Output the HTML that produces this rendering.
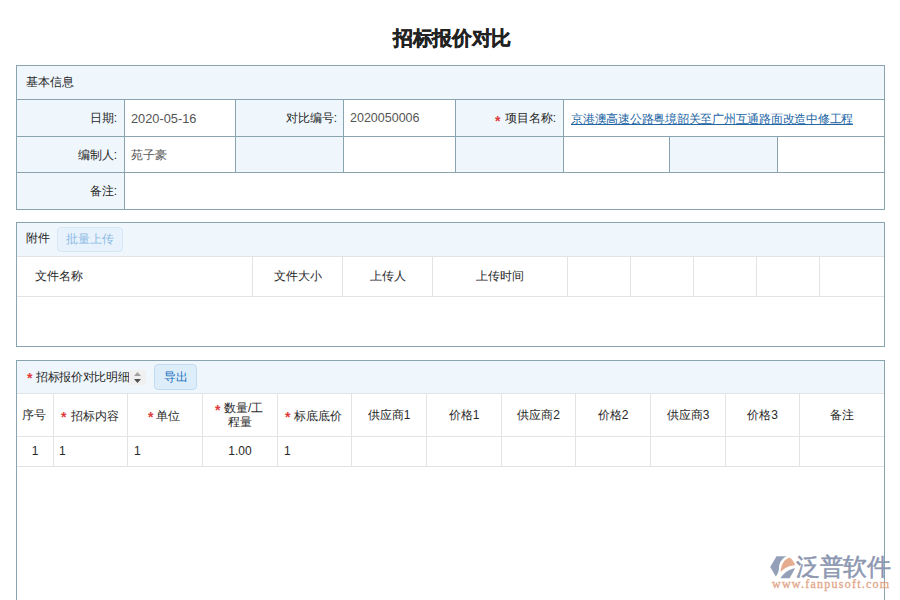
<!DOCTYPE html>
<html><head><meta charset="utf-8"><style>
html,body{margin:0;padding:0;width:900px;height:600px;overflow:hidden;background:#fff}
body{font-family:"Liberation Sans",sans-serif;font-size:12px;color:#282828;position:relative}
.a{position:absolute}
.t{position:absolute;white-space:nowrap;line-height:17px}
.star{position:absolute;font-size:14px;font-weight:bold;line-height:20px;color:#e03a3a}
.lnk{color:#2366a5;text-decoration:underline}
.btn1{box-sizing:border-box;border:1px solid #d6e7f6;background:#e7f2fc;border-radius:4px;color:#8dbbe4;text-align:center;line-height:23px}
.btn2{box-sizing:border-box;border:1px solid #c3dbef;background:#ddedfa;border-radius:4px;color:#1a70be;text-align:center;line-height:24px}
</style></head><body>
<div class="t" style="left:2px;width:900px;text-align:center;top:25px;font-size:20px;font-weight:bold;color:#222;line-height:27px;-webkit-text-stroke:0.3px #222;letter-spacing:-0.3px">招标报价对比</div>
<div class="a" style="left:16px;top:65px;width:869px;height:145px;background:#fff;box-sizing:border-box;border:1px solid #89a3b0"></div>
<div class="a" style="left:17px;top:66px;width:867px;height:33px;background:#eff7fd;"></div>
<div class="a" style="left:17px;top:99px;width:867px;height:1px;background:#89a3b0;"></div>
<div class="a" style="left:17px;top:136px;width:867px;height:1px;background:#89a3b0;"></div>
<div class="a" style="left:17px;top:172px;width:867px;height:1px;background:#89a3b0;"></div>
<div class="a" style="left:17px;top:100px;width:107px;height:36px;background:#eff7fd;"></div>
<div class="a" style="left:236px;top:100px;width:107px;height:36px;background:#eff7fd;"></div>
<div class="a" style="left:456px;top:100px;width:107px;height:36px;background:#eff7fd;"></div>
<div class="a" style="left:17px;top:137px;width:107px;height:35px;background:#eff7fd;"></div>
<div class="a" style="left:236px;top:137px;width:107px;height:35px;background:#eff7fd;"></div>
<div class="a" style="left:456px;top:137px;width:107px;height:35px;background:#eff7fd;"></div>
<div class="a" style="left:670px;top:137px;width:107px;height:35px;background:#eff7fd;"></div>
<div class="a" style="left:17px;top:173px;width:107px;height:36px;background:#eff7fd;"></div>
<div class="a" style="left:124px;top:100px;width:1px;height:109px;background:#89a3b0;"></div>
<div class="a" style="left:235px;top:100px;width:1px;height:72px;background:#89a3b0;"></div>
<div class="a" style="left:343px;top:100px;width:1px;height:72px;background:#89a3b0;"></div>
<div class="a" style="left:455px;top:100px;width:1px;height:72px;background:#89a3b0;"></div>
<div class="a" style="left:563px;top:100px;width:1px;height:72px;background:#89a3b0;"></div>
<div class="a" style="left:669px;top:137px;width:1px;height:35px;background:#89a3b0;"></div>
<div class="a" style="left:777px;top:137px;width:1px;height:35px;background:#89a3b0;"></div>
<div class="t" style="left:26px;top:74px;">基本信息</div>
<div class="t" style="right:783px;top:110px;">日期:</div>
<div class="t" style="left:131px;top:110px;color:#555;font-size:12.8px">2020-05-16</div>
<div class="t" style="right:563px;top:110px;">对比编号:</div>
<div class="t" style="left:350px;top:110px;color:#555;font-size:12.5px">2020050006</div>
<div class="t" style="right:344px;top:110px;">项目名称:</div>
<div class="a star" style="left:495px;top:111px">*</div>
<div class="t" style="left:571px;top:111px;"><span class="lnk" style="letter-spacing:-0.25px">京港澳高速公路粤境韶关至广州互通路面改造中修工程</span></div>
<div class="t" style="right:783px;top:147px;">编制人:</div>
<div class="t" style="left:131px;top:147px;color:#555">苑子豪</div>
<div class="t" style="right:783px;top:183px;">备注:</div>
<div class="a" style="left:16px;top:222px;width:869px;height:125px;background:#fff;box-sizing:border-box;border:1px solid #89a3b0"></div>
<div class="a" style="left:17px;top:223px;width:867px;height:33px;background:#eff7fd;"></div>
<div class="a" style="left:17px;top:256px;width:867px;height:1px;background:#e3e3e3;"></div>
<div class="a" style="left:17px;top:296px;width:867px;height:1px;background:#e3e3e3;"></div>
<div class="a" style="left:252px;top:257px;width:1px;height:39px;background:#e3e3e3;"></div>
<div class="a" style="left:342px;top:257px;width:1px;height:39px;background:#e3e3e3;"></div>
<div class="a" style="left:432px;top:257px;width:1px;height:39px;background:#e3e3e3;"></div>
<div class="a" style="left:567px;top:257px;width:1px;height:39px;background:#e3e3e3;"></div>
<div class="a" style="left:630px;top:257px;width:1px;height:39px;background:#e3e3e3;"></div>
<div class="a" style="left:693px;top:257px;width:1px;height:39px;background:#e3e3e3;"></div>
<div class="a" style="left:756px;top:257px;width:1px;height:39px;background:#e3e3e3;"></div>
<div class="a" style="left:819px;top:257px;width:1px;height:39px;background:#e3e3e3;"></div>
<div class="t" style="left:26px;top:230px;">附件</div>
<div class="a btn1" style="left:57px;top:227px;width:66px;height:25px"><span>批量上传</span></div>
<div class="t" style="left:35px;top:268px;">文件名称</div>
<div class="t" style="left:253px;width:89px;text-align:center;top:268px;">文件大小</div>
<div class="t" style="left:343px;width:89px;text-align:center;top:268px;">上传人</div>
<div class="t" style="left:433px;width:134px;text-align:center;top:268px;">上传时间</div>
<div class="a" style="left:16px;top:360px;width:869px;height:260px;background:#fff;box-sizing:border-box;border:1px solid #89a3b0;border-bottom:none"></div>
<div class="a" style="left:17px;top:361px;width:867px;height:32px;background:#eff7fd;"></div>
<div class="a" style="left:17px;top:393px;width:867px;height:1px;background:#e3e3e3;"></div>
<div class="a" style="left:17px;top:436px;width:867px;height:1px;background:#e3e3e3;"></div>
<div class="a" style="left:17px;top:466px;width:867px;height:1px;background:#e3e3e3;"></div>
<div class="a" style="left:53px;top:394px;width:1px;height:72px;background:#e3e3e3;"></div>
<div class="a" style="left:127px;top:394px;width:1px;height:72px;background:#e3e3e3;"></div>
<div class="a" style="left:202px;top:394px;width:1px;height:72px;background:#e3e3e3;"></div>
<div class="a" style="left:277px;top:394px;width:1px;height:72px;background:#e3e3e3;"></div>
<div class="a" style="left:351px;top:394px;width:1px;height:72px;background:#e3e3e3;"></div>
<div class="a" style="left:426px;top:394px;width:1px;height:72px;background:#e3e3e3;"></div>
<div class="a" style="left:501px;top:394px;width:1px;height:72px;background:#e3e3e3;"></div>
<div class="a" style="left:575px;top:394px;width:1px;height:72px;background:#e3e3e3;"></div>
<div class="a" style="left:650px;top:394px;width:1px;height:72px;background:#e3e3e3;"></div>
<div class="a" style="left:725px;top:394px;width:1px;height:72px;background:#e3e3e3;"></div>
<div class="a" style="left:799px;top:394px;width:1px;height:72px;background:#e3e3e3;"></div>
<div class="t" style="left:36px;top:369px;letter-spacing:-0.35px">招标报价对比明细</div>
<div class="a star" style="left:27px;top:368px">*</div>
<div class="a" style="left:129px;top:370px;width:17px;height:15px;background:#f0f0f0;"></div>
<svg class="a" style="left:133px;top:371px" width="9" height="13" viewBox="0 0 9 13"><path d="M4.5 1 L8 5 L1 5 Z" fill="#a0a0a0"/><path d="M1 8 L8 8 L4.5 12 Z" fill="#505050"/></svg>
<div class="a btn2" style="left:154px;top:364px;width:43px;height:26px"><span>导出</span></div>
<div class="t" style="left:16px;width:36px;text-align:center;top:407px;">序号</div>
<div class="t" style="left:352px;width:74px;text-align:center;top:407px;">供应商1</div>
<div class="t" style="left:427px;width:74px;text-align:center;top:407px;">价格1</div>
<div class="t" style="left:502px;width:73px;text-align:center;top:407px;">供应商2</div>
<div class="t" style="left:576px;width:74px;text-align:center;top:407px;">价格2</div>
<div class="t" style="left:651px;width:74px;text-align:center;top:407px;">供应商3</div>
<div class="t" style="left:726px;width:73px;text-align:center;top:407px;">价格3</div>
<div class="t" style="left:800px;width:84px;text-align:center;top:407px;">备注</div>
<div class="a star" style="left:61px;top:407px">*</div>
<div class="t" style="left:71px;top:408px;">招标内容</div>
<div class="a star" style="left:148px;top:407px">*</div>
<div class="t" style="left:156px;top:408px;">单位</div>
<div class="a star" style="left:215px;top:400px">*</div>
<div class="t" style="left:224px;top:400px;">数量/工</div>
<div class="t" style="left:228px;top:414px;">程量</div>
<div class="a star" style="left:285px;top:407px">*</div>
<div class="t" style="left:294px;top:408px;">标底底价</div>
<div class="t" style="left:17px;width:36px;text-align:center;top:443px;">1</div>
<div class="t" style="left:59px;top:443px;">1</div>
<div class="t" style="left:134px;top:443px;">1</div>
<div class="t" style="left:203px;width:74px;text-align:center;top:443px;">1.00</div>
<div class="t" style="left:284px;top:443px;">1</div>
<svg class="a" style="left:766px;top:552px;opacity:0.92" width="36" height="30" viewBox="0 0 36 30">
<path d="M10.5 4.2 L20.5 4.2 C15.5 7 13 11 13 16 C13 19.5 11.5 22 9.8 24.6 L4.2 15 Z" fill="#8c99b2"/>
<path d="M14.6 20 C15 13 18 7.5 23.5 5.6 C26 7 28 10 29.2 13.3 C24 13.2 18.5 16 14.6 20 Z" fill="#e3a586"/>
<path d="M14.5 26.3 C17 21.5 22 17.5 29.2 16.2 L23.6 26.3 Z" fill="#8c99b2"/>
</svg>
<div class="a" style="left:796px;top:552px;font-size:24px;line-height:30px;color:#8792ad;-webkit-text-stroke:0.5px #8792ad;opacity:0.95;letter-spacing:-0.3px">泛普软件</div>
<div class="a" style="left:772px;top:577px;font-family:'Liberation Serif',serif;font-size:12px;line-height:14px;color:#e0a384;-webkit-text-stroke:0.3px #e0a384;letter-spacing:1.25px;opacity:0.95">www.fanpusoft.com</div>

</body></html>
